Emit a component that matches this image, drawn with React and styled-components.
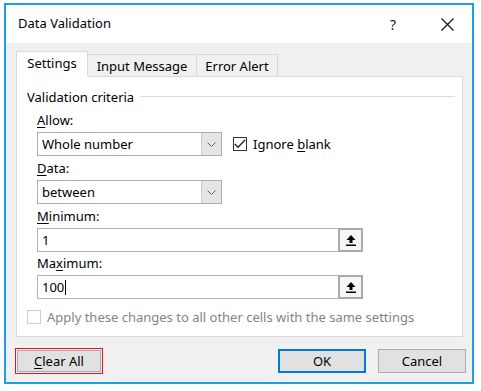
import React from 'react'
import styled, { createGlobalStyle } from 'styled-components'

const GlobalStyle = createGlobalStyle`
  html, body {
    margin: 0;
    padding: 0;
    background: #ffffff;
  }
  body {
    font-family: "Noto Sans", "Open Sans", sans-serif;
    font-size: 13px;
    color: #000;
  }
`

const Window = styled.div`
  margin: 3px 0 0 4px;
  width: 466px;
  height: 377px;
  border: 2px solid #1ba1e2;
  background: #f0f0f0;
  display: flex;
  flex-direction: column;
`

const TitleBar = styled.div`
  height: 38px;
  background: #ffffff;
  display: flex;
  align-items: center;
  padding-left: 12px;

  .title {
    flex: 1;
    font-size: 13px;
    margin-top: -2px;
  }
`

const TitleButton = styled.div`
  width: ${(p) => p.w}px;
  display: flex;
  justify-content: center;
  align-items: center;
  font-size: 14px;
  color: #222;
`

const Body = styled.div`
  flex: 1;
  padding: 9px 9px 0 10px;
  display: flex;
  flex-direction: column;
`

const TabRow = styled.div`
  display: flex;
  align-items: flex-end;
  height: 25px;
  margin-bottom: -1px;
  position: relative;
  z-index: 1;
`

const Tab = styled.div`
  box-sizing: border-box;
  width: ${(p) => p.w}px;
  height: ${(p) => (p.active ? 26 : 23)}px;
  border: 1px solid #d9d9d9;
  border-left: ${(p) => (p.first || p.active ? '1px solid #d9d9d9' : 'none')};
  border-bottom: ${(p) => (p.active ? '1px solid #fff' : '1px solid #d9d9d9')};
  background: ${(p) => (p.active ? '#ffffff' : '#f0f0f0')};
  display: flex;
  align-items: center;
  justify-content: center;
  padding-bottom: ${(p) => (p.active ? 3 : 0)}px;
  font-size: 13px;
`

const Panel = styled.div`
  box-sizing: border-box;
  height: 261px;
  background: #ffffff;
  border: 1px solid #d9d9d9;
  padding: 11px 7px 0 10px;
`

const Legend = styled.div`
  display: flex;
  align-items: center;
  height: 17px;

  span {
    padding-right: 6px;
  }
  &::after {
    content: '';
    flex: 1;
    height: 1px;
    background: #dcdcdc;
  }
`

const Fields = styled.div`
  padding-left: 10px;
  display: flex;
  flex-direction: column;
`

const Label = styled.div`
  height: 16px;
  line-height: 16px;
  margin-top: ${(p) => p.mt || 0}px;
  margin-bottom: ${(p) => p.mb || 4}px;

  u {
    text-decoration: underline;
    text-underline-offset: 2px;
  }
`

const Row = styled.div`
  display: flex;
  align-items: center;
`

const Select = styled.div`
  box-sizing: border-box;
  width: 185px;
  height: 24px;
  border: 1px solid #adadad;
  display: flex;
  align-items: stretch;

  .value {
    flex: 1;
    display: flex;
    align-items: center;
    padding-left: 4px;
  }
`

const DropButton = styled.div`
  width: 19px;
  background: #e5e5e5;
  border-left: 1px solid #cfcfcf;
  display: flex;
  align-items: center;
  justify-content: center;
`

const CheckRow = styled.label`
  display: flex;
  align-items: center;
  gap: 6px;
  margin-left: ${(p) => (p.disabled ? 0 : 11)}px;
  color: ${(p) => (p.disabled ? '#838383' : '#000')};
  margin-top: ${(p) => p.mt || 0}px;

  u {
    text-underline-offset: 2px;
  }
`

const Box = styled.span`
  box-sizing: border-box;
  width: 14px;
  height: 14px;
  border: 1px solid ${(p) => (p.disabled ? '#cccccc' : '#333333')};
  background: #fff;
  display: flex;
  align-items: center;
  justify-content: center;
`

const RefInput = styled.div`
  box-sizing: border-box;
  width: 326px;
  height: 24px;
  border: 1px solid #b4b4b4;
  display: flex;
  align-items: stretch;

  .value {
    flex: 1;
    display: flex;
    align-items: center;
    padding-left: 4px;
  }
  .caret {
    width: 1px;
    height: 15px;
    background: #000;
    margin-left: 1px;
  }
`

const RefButton = styled.div`
  box-sizing: border-box;
  width: 25px;
  margin: -1px -1px -1px 0;
  border: 2px solid #a9a9a9;
  background: #f6f6f6;
  display: flex;
  align-items: center;
  justify-content: center;
`

const Footer = styled.div`
  display: flex;
  align-items: center;
  padding: 11px 0 0 0;
  margin-right: -3px;
  margin-left: -1px;

  .spacer {
    flex: 1;
  }
`

const Highlight = styled.div`
  border: 1px solid #e81123;
  padding: 1px;
`

const Button = styled.button`
  box-sizing: border-box;
  width: ${(p) => p.w || 88}px;
  height: ${(p) => p.h || 24}px;
  margin-left: ${(p) => p.ml || 0}px;
  font-family: inherit;
  font-size: 13px;
  color: #000;
  background: #e1e1e1;
  border: ${(p) => (p.primary ? '2px solid #0078d7' : '1px solid #adadad')};
  padding: 0;
  cursor: default;

  u {
    text-underline-offset: 2px;
  }
`

const Chevron = () => (
  <svg width="9" height="5" viewBox="0 0 9 5">
    <path d="M0.5 0.5 L4.5 4.5 L8.5 0.5" fill="none" stroke="#606060" strokeWidth="1" />
  </svg>
)

const UpArrow = () => (
  <svg width="10" height="11" viewBox="0 0 10 11">
    <path d="M5 0 L9.5 5 L6.5 5 L6.5 8 L3.5 8 L3.5 5 L0.5 5 Z" fill="#000" />
    <rect x="0" y="9.5" width="10" height="1.5" fill="#000" />
  </svg>
)

const Check = () => (
  <svg width="12" height="10" viewBox="0 0 12 10">
    <path d="M0.8 5 L4 8.3 L11.2 0.8" fill="none" stroke="#222" strokeWidth="1.3" />
  </svg>
)

export default function App() {
  return (
    <>
      <GlobalStyle />
      <Window>
        <TitleBar>
          <div className="title">Data Validation</div>
          <TitleButton w={58}>?</TitleButton>
          <TitleButton w={50}>
            <svg width="13" height="13" viewBox="0 0 13 13">
              <path d="M0.5 0.5 L12.5 12.5 M12.5 0.5 L0.5 12.5" stroke="#111" strokeWidth="1.2" />
            </svg>
          </TitleButton>
        </TitleBar>
        <Body>
          <TabRow>
            <Tab w={72} active first>Settings</Tab>
            <Tab w={109}>Input Message</Tab>
            <Tab w={81}>Error Alert</Tab>
          </TabRow>
          <Panel>
            <Legend>
              <span>Validation criteria</span>
            </Legend>
            <Fields>
              <Label mt={7}>
                <u>A</u>llow:
              </Label>
              <Row>
                <Select>
                  <div className="value">Whole number</div>
                  <DropButton>
                    <Chevron />
                  </DropButton>
                </Select>
                <CheckRow>
                  <Box>
                    <Check />
                  </Box>
                  <span>
                    Ignore <u>b</u>lank
                  </span>
                </CheckRow>
              </Row>
              <Label mt={4}>
                <u>D</u>ata:
              </Label>
              <Select>
                <div className="value">between</div>
                <DropButton>
                  <Chevron />
                </DropButton>
              </Select>
              <Label mt={4}>
                <u>M</u>inimum:
              </Label>
              <RefInput>
                <div className="value">1</div>
                <RefButton>
                  <UpArrow />
                </RefButton>
              </RefInput>
              <Label mt={3}>
                Ma<u>x</u>imum:
              </Label>
              <RefInput>
                <div className="value">
                  100<span className="caret" />
                </div>
                <RefButton>
                  <UpArrow />
                </RefButton>
              </RefInput>
            </Fields>
            <CheckRow disabled mt={9}>
              <Box disabled />
              <span>Apply these changes to all other cells with the same settings</span>
            </CheckRow>
          </Panel>
          <Footer>
            <Highlight>
              <Button w={84} h={22}>
                <u>C</u>lear All
              </Button>
            </Highlight>
            <div className="spacer" />
            <Button primary>OK</Button>
            <Button ml={12}>Cancel</Button>
          </Footer>
        </Body>
      </Window>
    </>
  )
}
